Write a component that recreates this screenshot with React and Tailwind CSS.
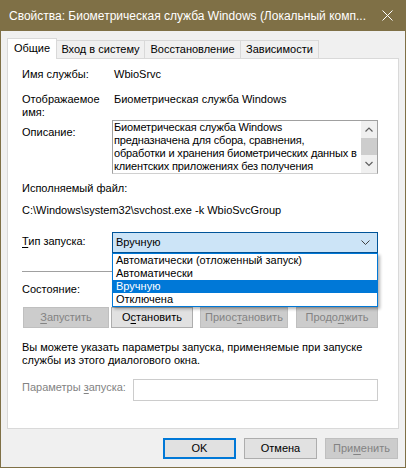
import { useState } from 'react'

const font = { fontFamily: '"Liberation Sans", Arial, sans-serif' }

function Btn({ children, disabled, primary, className = '' }) {
  return (
    <div
      className={
        'flex items-center justify-center h-[21px] text-[11px] leading-none ' +
        (disabled
          ? 'bg-[#cccccc] border border-[#bfbfbf] text-[#838383] '
          : primary
            ? 'bg-[#e1e1e1] border-2 border-[#0078d7] text-black '
            : 'bg-[#e1e1e1] border border-[#adadad] text-black ') +
        className
      }
    >
      {children}
    </div>
  )
}

function Tab({ children, active, w }) {
  if (active) {
    return (
      <div className={`${w} h-[21px] -mb-px z-10 bg-white border border-b-0 border-[#d9d9d9] flex items-center justify-center text-[11px] text-black pb-[2px]`}>
        {children}
      </div>
    )
  }
  return (
    <div className={`${w} h-[18px] -ml-px bg-[#f0f0f0] border border-b-0 border-[#d9d9d9] flex items-center justify-center text-[11px] text-black`}>
      {children}
    </div>
  )
}

export default function App() {
  const [startup] = useState('Вручную')
  const options = ['Автоматически (отложенный запуск)', 'Автоматически', 'Вручную', 'Отключена']

  return (
    <div style={font} className="w-[406px] h-[468px] bg-[#f0f0f0] border-x border-b border-[#7f7046] flex flex-col select-none">
      {/* Title bar */}
      <div className="h-[31px] -mx-px bg-[#7f7046] flex items-center pl-[9px] pr-[13px] text-white text-[12px]">
        <span className="flex-1 whitespace-nowrap overflow-hidden">
          Свойства: Биометрическая служба Windows (Локальный комп...
        </span>
        <svg width="11" height="11" viewBox="0 0 11 11" className="text-white">
          <path d="M0.5 0.5 L10.5 10.5 M10.5 0.5 L0.5 10.5" stroke="currentColor" strokeWidth="1" />
        </svg>
      </div>

      <div className="px-[6px] pt-[6px] flex flex-col">
        {/* Tabs */}
        <div className="flex items-end h-[21px]">
          <Tab active w="w-[50px]">Общие</Tab>
          <Tab w="w-[89px]">Вход в систему</Tab>
          <Tab w="w-[97px]">Восстановление</Tab>
          <Tab w="w-[79px]">Зависимости</Tab>
        </div>

        {/* Panel */}
        <div className="h-[371px] bg-white border border-[#d9d9d9] pl-[14px] text-[11px] leading-[13px] text-black">
          <div className="w-[356px] flex flex-col">
            <div className="flex mt-[9px] h-[13px]">
              <div className="w-[92px]">Имя службы:</div>
              <div>WbioSrvc</div>
            </div>

            <div className="flex mt-[12px] h-[26px]">
              <div className="w-[92px]">Отображаемое<br />имя:</div>
              <div>Биометрическая служба Windows</div>
            </div>

            <div className="flex mt-[1px]">
              <div className="w-[90px] pt-[6px]">Описание:</div>
              <div className="w-[266px] h-[54px] border border-[#a0a0a0] border-b-[#d0d0d0] flex">
                <div className="flex-1 pl-[1px] whitespace-nowrap overflow-hidden tracking-[-0.15px]">
                  <div>Биометрическая служба Windows</div>
                  <div>предназначена для сбора, сравнения,</div>
                  <div>обработки и хранения биометрических данных в</div>
                  <div>клиентских приложениях без получения</div>
                </div>
                <div className="w-[16px] bg-[#f0f0f0] flex flex-col items-center">
                  <svg width="16" height="17" viewBox="0 0 16 17">
                    <path d="M4.5 10.5 L8 7 L11.5 10.5" fill="none" stroke="#606060" strokeWidth="1.2" />
                  </svg>
                  <div className="w-[16px] h-[17px] bg-[#cdcdcd]" />
                  <svg width="16" height="18" viewBox="0 0 16 18" className="mt-auto">
                    <path d="M4.5 7 L8 10.5 L11.5 7" fill="none" stroke="#606060" strokeWidth="1.2" />
                  </svg>
                </div>
              </div>
            </div>

            <div className="mt-[8px]">Исполняемый файл:</div>
            <div className="mt-[9px] whitespace-nowrap">C:\Windows\system32\svchost.exe -k WbioSvcGroup</div>

            <div className="flex mt-[15px]">
              <div className="w-[90px] pt-[3px]">
                <span className="underline underline-offset-2">Т</span>ип запуска:
              </div>
              <div className="relative w-[266px]">
                <div className="h-[21px] bg-[#cce4f7] border border-[#005499] flex items-center pl-[3px] pr-[7px]">
                  <span className="flex-1">{startup}</span>
                  <svg width="9" height="5" viewBox="0 0 9 5">
                    <path d="M0.5 0.5 L4.5 4.5 L8.5 0.5" fill="none" stroke="#404040" strokeWidth="1" />
                  </svg>
                </div>
                {/* Dropdown list */}
                <div className="absolute left-0 top-full z-20 w-[266px] bg-white border border-[#0078d7] shadow-[2px_2px_3px_rgba(0,0,0,0.3)]">
                  {options.map((o) => (
                    <div
                      key={o}
                      className={
                        'h-[13px] pl-[3px] whitespace-nowrap ' +
                        (o === startup ? 'bg-[#0078d7] text-white' : 'text-black')
                      }
                    >
                      {o}
                    </div>
                  ))}
                </div>
              </div>
            </div>

            <div className="mt-[18px] h-px bg-[#a0a0a0]" />

            <div className="mt-[11px]">Состояние:</div>

            <div className="flex mt-[11px] ml-px">
              <Btn disabled className="w-[86px]">
                <span><span className="underline underline-offset-2">З</span>апустить</span>
              </Btn>
              <Btn className="w-[82px] ml-[2px]">
                <span>О<span className="underline underline-offset-2">с</span>тановить</span>
              </Btn>
              <Btn disabled className="w-[88px] ml-[7px]">
                <span>Приос<span className="underline underline-offset-2">т</span>ановить</span>
              </Btn>
              <Btn disabled className="w-[82px] ml-[8px]">
                <span>Продо<span className="underline underline-offset-2">л</span>жить</span>
              </Btn>
            </div>

            <div className="mt-[13px]">
              Вы можете указать параметры запуска, применяемые при запуске
              <br />
              службы из этого диалогового окна.
            </div>

            <div className="flex mt-[12px]">
              <div className="w-[111px] pt-[2px] text-[#838383] whitespace-nowrap">
                Параметры <span className="underline underline-offset-2">з</span>апуска:
              </div>
              <div className="flex-1 h-[22px] border border-[#cccccc]" />
            </div>
          </div>
        </div>

        {/* Dialog buttons */}
        <div className="flex justify-end mt-[9px] pr-[1px]">
          <Btn primary className="w-[73px]">OK</Btn>
          <Btn className="w-[73px] ml-[8px]">Отмена</Btn>
          <Btn disabled className="w-[73px] ml-[8px]">
            <span>При<span className="underline underline-offset-2">м</span>енить</span>
          </Btn>
        </div>
      </div>
    </div>
  )
}
